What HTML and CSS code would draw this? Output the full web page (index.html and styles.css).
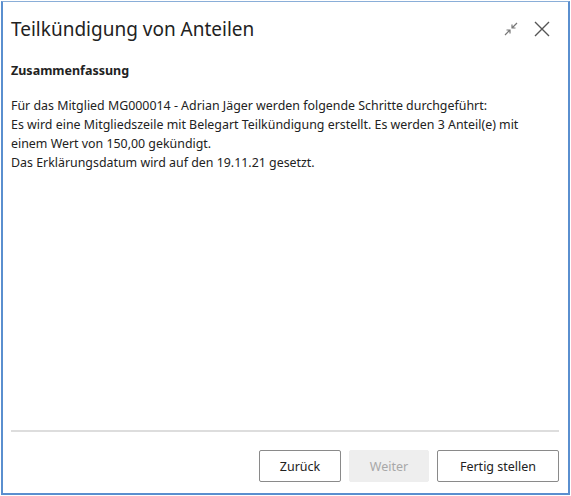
FILE: index.html
```
<!DOCTYPE html>
<html lang="de">
<head>
<meta charset="utf-8">
<link rel="stylesheet" href="styles.css">
</head>
<body>
<div class="frame">
  <div class="dialog">
    <div class="header">
      <h1 class="title">Teilkündigung von Anteilen</h1>
      <div class="actions">
        <svg class="icon" width="16" height="16" viewBox="0 0 16 16" fill="none" stroke="#777" stroke-width="1.2">
          <path d="M2 14 L7 9 M3.5 9 H7 V12.5"/>
          <path d="M14 2 L9 7 M12.5 7 H9 V3.5"/>
        </svg>
        <svg class="icon" width="18" height="18" viewBox="0 0 18 18" fill="none" stroke="#555" stroke-width="1.4">
          <path d="M2 2 L16 16 M16 2 L2 16"/>
        </svg>
      </div>
    </div>
    <div class="content">
      <h2 class="section">Zusammenfassung</h2>
      <p class="text">Für das Mitglied MG000014 - Adrian Jäger werden folgende Schritte durchgeführt:<br>Es wird eine Mitgliedszeile mit Belegart Teilkündigung erstellt. Es werden 3 Anteil(e) mit einem Wert von 150,00 gekündigt.<br>Das Erklärungsdatum wird auf den 19.11.21 gesetzt.</p>
    </div>
    <div class="footer">
      <button class="btn">Zurück</button>
      <button class="btn disabled">Weiter</button>
      <button class="btn wide">Fertig stellen</button>
    </div>
  </div>
</div>
</body>
</html>
```
FILE: styles.css
```
html, body {
  margin: 0;
  padding: 0;
  background: #ffffff;
}
.frame {
  padding: 1px 1px 1px 1px;
  width: 571px;
  height: 496px;
  box-sizing: border-box;
}
.dialog {
  height: 100%;
  box-sizing: border-box;
  border: 2px solid #5a8fcf;
  border-top: 1px solid #8aaed8;
  display: flex;
  flex-direction: column;
  font-family: "Noto Sans", "Open Sans", sans-serif;
  color: #222;
}
.header {
  display: flex;
  justify-content: space-between;
  align-items: center;
  padding: 13px 17px 0 8px;
  height: 28px;
}
.title {
  margin: 0;
  font-size: 19px;
  font-weight: 400;
  color: #222;
}
.actions {
  display: flex;
  align-items: center;
  gap: 14px;
}
.icon { display: block; }
.content {
  flex: 1;
  padding: 19px 8px 0 8px;
}
.section {
  margin: 0;
  font-size: 12.5px;
  font-weight: 700;
}
.text {
  margin: 17px 0 0 0;
  font-size: 12.4px;
  line-height: 19px;
  width: 540px;
}
.footer {
  margin: 0 9px 0 8px;
  border-top: 2px solid #dddddd;
  display: flex;
  justify-content: flex-end;
  gap: 8px;
  padding: 18px 0 11px 0;
}
.btn {
  font-family: inherit;
  font-size: 12.5px;
  height: 32px;
  width: 82px;
  background: #fff;
  border: 1px solid #8a8a8a;
  border-radius: 2px;
  color: #222;
  padding: 0;
}
.btn.disabled {
  background: #eeeeee;
  border-color: #eeeeee;
  color: #a8a8a8;
  width: 80px;
}
.btn.wide { width: 122px; }
```
